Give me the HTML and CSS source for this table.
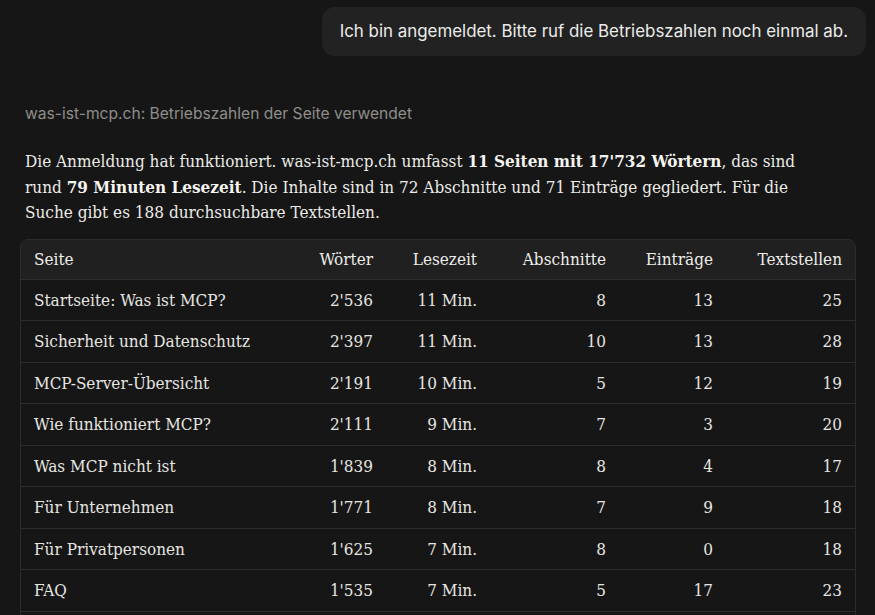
FILE: index.html
```html
<!DOCTYPE html>
<html lang="de">
<head>
<meta charset="utf-8">
<link rel="stylesheet" href="styles.css">
</head>
<body>
<div class="chat">
  <div class="user-row">
    <div class="bubble">Ich bin angemeldet. Bitte ruf die Betriebszahlen noch einmal ab.</div>
  </div>
  <div class="tool-line">was-ist-mcp.ch: Betriebszahlen der Seite verwendet</div>
  <p class="answer">Die Anmeldung hat funktioniert. was-ist-mcp.ch umfasst <strong>11 Seiten mit 17'732 Wörtern</strong>, das sind rund <strong>79 Minuten Lesezeit</strong>. Die Inhalte sind in 72 Abschnitte und 71 Einträge gegliedert. Für die Suche gibt es 188 durchsuchbare Textstellen.</p>
  <div class="table-wrap">
    <table class="stats">
      <colgroup>
        <col class="c-page"><col class="c-words"><col class="c-time"><col class="c-sec"><col class="c-ent"><col class="c-txt">
      </colgroup>
      <thead>
        <tr><th class="l">Seite</th><th>Wörter</th><th>Lesezeit</th><th>Abschnitte</th><th>Einträge</th><th>Textstellen</th></tr>
      </thead>
      <tbody>
        <tr><td class="l">Startseite: Was ist MCP?</td><td>2'536</td><td>11 Min.</td><td>8</td><td>13</td><td>25</td></tr>
        <tr><td class="l">Sicherheit und Datenschutz</td><td>2'397</td><td>11 Min.</td><td>10</td><td>13</td><td>28</td></tr>
        <tr><td class="l">MCP-Server-Übersicht</td><td>2'191</td><td>10 Min.</td><td>5</td><td>12</td><td>19</td></tr>
        <tr><td class="l">Wie funktioniert MCP?</td><td>2'111</td><td>9 Min.</td><td>7</td><td>3</td><td>20</td></tr>
        <tr><td class="l">Was MCP nicht ist</td><td>1'839</td><td>8 Min.</td><td>8</td><td>4</td><td>17</td></tr>
        <tr><td class="l">Für Unternehmen</td><td>1'771</td><td>8 Min.</td><td>7</td><td>9</td><td>18</td></tr>
        <tr><td class="l">Für Privatpersonen</td><td>1'625</td><td>7 Min.</td><td>8</td><td>0</td><td>18</td></tr>
        <tr><td class="l">FAQ</td><td>1'535</td><td>7 Min.</td><td>5</td><td>17</td><td>23</td></tr>
        <tr><td class="l">Glossar</td><td>1'402</td><td>6 Min.</td><td>7</td><td>0</td><td>14</td></tr>
      </tbody>
    </table>
  </div>
</div>
</body>
</html>
```
FILE: styles.css
```css
html, body {
  margin: 0;
  padding: 0;
  background: #161616;
  height: 100%;
  overflow: hidden;
}
.chat {
  display: flex;
  flex-direction: column;
  padding: 7px 19px 0 20px;
  color: #e9e8e4;
}
.user-row {
  display: flex;
  justify-content: flex-end;
  margin-right: -10px;
}
.bubble {
  background: #222222;
  border-radius: 13px;
  padding: 12px 18px;
  font-family: Inter, "Noto Sans", sans-serif;
  font-size: 16.9px;
  line-height: 25px;
  color: #ececea;
}
.tool-line {
  margin-top: 48px;
  padding-left: 5px;
  font-family: Inter, "Noto Sans", sans-serif;
  font-size: 15.6px;
  line-height: 20px;
  color: #8e8d89;
}
.answer {
  margin: 25px 0 0 0;
  padding: 0 50px 0 5px;
  font-family: "DejaVu Serif Condensed", "DejaVu Serif", serif;
  font-stretch: condensed;
  font-size: 17px;
  line-height: 25.5px;
  color: #ecebe7;
}
.answer strong {
  font-weight: 700;
  color: #f5f4f0;
}
.table-wrap {
  margin-top: 13px;
  border: 1px solid #2c2c2c;
  border-radius: 8px;
  overflow: hidden;
}
.stats {
  width: 100%;
  border-collapse: collapse;
  table-layout: fixed;
  font-family: "DejaVu Serif Condensed", "DejaVu Serif", serif;
  font-stretch: condensed;
  font-size: 17px;
  color: #e6e5e1;
}
.c-page { width: 275px; }
.c-words { width: 90px; }
.c-time { width: 104px; }
.c-sec { width: 129px; }
.c-ent { width: 107px; }
.c-txt { width: auto; }
.stats th {
  background: #202020;
  font-weight: 400;
  color: #eeede9;
  height: 39px;
  padding: 0 13px;
  text-align: right;
  border-bottom: 1px solid #2f2f2f;
}
.stats td {
  height: 40.5px;
  padding: 0 13px;
  text-align: right;
  border-top: 1px solid #2c2c2c;
}
.stats .l {
  text-align: left;
}
```
